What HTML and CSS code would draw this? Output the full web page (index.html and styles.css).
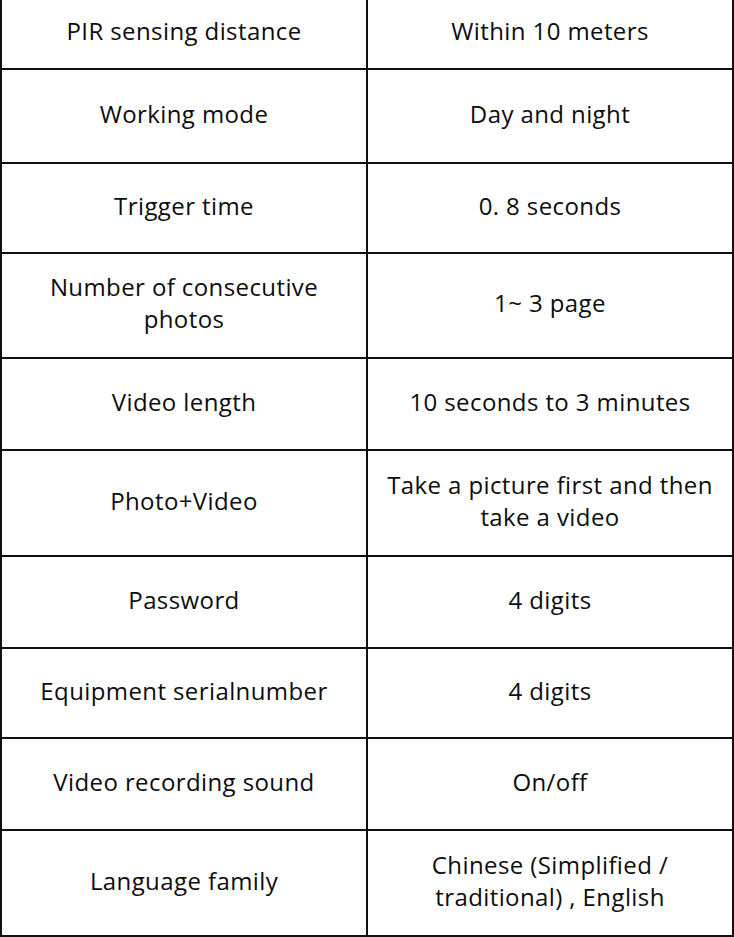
FILE: index.html
```html
<!DOCTYPE html>
<html>
<head>
<meta charset="utf-8">
<link rel="stylesheet" href="styles.css">
</head>
<body>
<table class="spec">
  <tr class="r76"><td>PIR sensing distance</td><td>Within 10 meters</td></tr>
  <tr class="r94"><td>Working mode</td><td>Day and night</td></tr>
  <tr class="r90"><td>Trigger time</td><td>0. 8 seconds</td></tr>
  <tr class="r105"><td>Number of consecutive<br>photos</td><td>1~ 3 page</td></tr>
  <tr class="r92"><td>Video length</td><td>10 seconds to 3 minutes</td></tr>
  <tr class="r106"><td>Photo+Video</td><td>Take a picture first and then<br>take a video</td></tr>
  <tr class="r92"><td>Password</td><td>4 digits</td></tr>
  <tr class="r90"><td>Equipment serialnumber</td><td>4 digits</td></tr>
  <tr class="r92"><td>Video recording sound</td><td>On/off</td></tr>
  <tr class="r106"><td>Language family</td><td>Chinese (Simplified /<br>traditional) , English</td></tr>
</table>
</body>
</html>
```
FILE: styles.css
```css
html, body {
  margin: 0;
  padding: 0;
  background: #ffffff;
}
.spec {
  border-collapse: collapse;
  width: 734px;
  table-layout: fixed;
  margin-top: -6px;
  font-family: "Open Sans", "Liberation Sans", sans-serif;
  font-size: 24px;
  letter-spacing: 0.4px;
  line-height: 32px;
  color: #0d0d0d;
}
.spec td {
  border: 2px solid #111111;
  text-align: center;
  vertical-align: middle;
  padding: 0 4px 5px;
  width: 50%;
}
.r76 td { height: 70px; padding-bottom: 2px; }
.r90 td { height: 83px; }
.r92 td { height: 85px; }
.r94 td { height: 87px; }
.r105 td { height: 98px; }
.r106 td { height: 99px; }
```
